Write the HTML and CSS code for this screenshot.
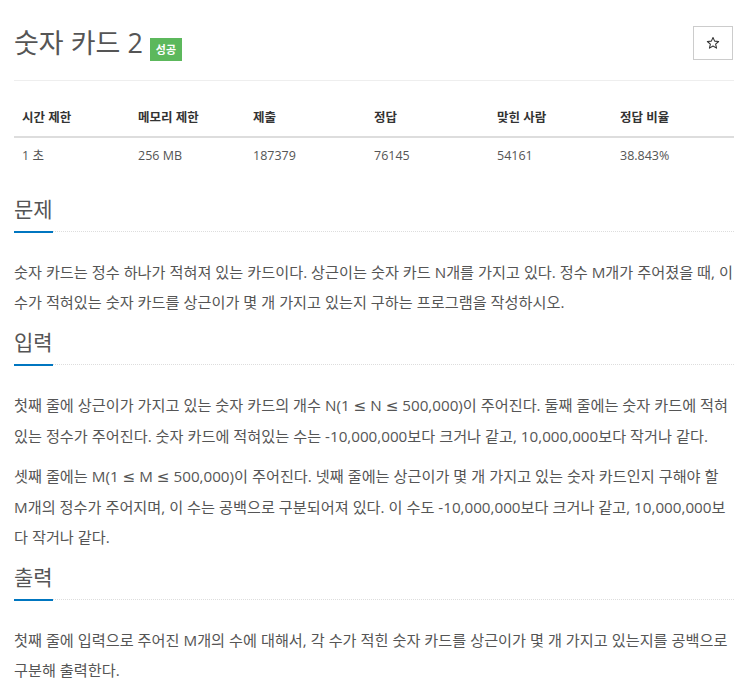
FILE: index.html
```html
<!DOCTYPE html>
<html lang="ko">
<head>
  <meta charset="UTF-8">
  <meta name="viewport" content="width=device-width, initial-scale=1.0">
  <title>숫자 카드 2</title>
  <link rel="stylesheet" href="styles.css">
</head>
<body>

<div class="container">
  <div class="page-header">
    <h1 class="title">숫자 카드 2 <span class="badge">성공</span></h1>
    <button class="star-btn" type="button">
      <svg width="14" height="14" viewBox="0 0 24 24"><path d="M12 2.5l2.8 6.3 6.9.6-5.2 4.6 1.6 6.8L12 17.2l-6.1 3.6 1.6-6.8L2.3 9.4l6.9-.6z" fill="none" stroke="#333" stroke-width="1.8" stroke-linejoin="round"/></svg>
    </button>
  </div>

  <table class="info-table">
    <colgroup>
      <col style="width:116px">
      <col style="width:115px">
      <col style="width:121px">
      <col style="width:123px">
      <col style="width:123px">
      <col style="width:122px">
    </colgroup>
    <thead>
      <tr>
        <th>시간 제한</th>
        <th>메모리 제한</th>
        <th>제출</th>
        <th>정답</th>
        <th>맞힌 사람</th>
        <th>정답 비율</th>
      </tr>
    </thead>
    <tbody>
      <tr>
        <td>1 초</td>
        <td>256 MB</td>
        <td>187379</td>
        <td>76145</td>
        <td>54161</td>
        <td>38.843%</td>
      </tr>
    </tbody>
  </table>

  <section class="problem-section">
    <h2 class="headline"><span>문제</span></h2>
    <div class="problem-text">
      <p>숫자 카드는 정수 하나가 적혀져 있는 카드이다. 상근이는 숫자 카드 <span class="word">N개를</span> 가지고 있다. 정수 <span class="word">M개가</span> 주어졌을 때, 이 수가 적혀있는 숫자 카드를 상근이가 몇 개 가지고 있는지 구하는 프로그램을 작성하시오.</p>
    </div>
  </section>

  <section class="problem-section">
    <h2 class="headline"><span>입력</span></h2>
    <div class="problem-text">
      <p>첫째 줄에 상근이가 가지고 있는 숫자 카드의 개수 N(1 <span class="op">≤</span> N <span class="op">≤</span> 500,000)이 주어진다. 둘째 줄에는 숫자 카드에 적혀있는 정수가 주어진다. 숫자 카드에 적혀있는 수는 -10,000,000보다 크거나 같고, 10,000,000보다 작거나 같다.</p>
      <p>셋째 줄에는 M(1 <span class="op">≤</span> M <span class="op">≤</span> 500,000)이 주어진다. 넷째 줄에는 상근이가 몇 개 가지고 있는 숫자 카드인지 구해야 할 <span class="word">M개의</span> 정수가 주어지며, 이 수는 공백으로 구분되어져 있다. 이 수도 -10,000,000보다 크거나 같고, 10,000,000보다 작거나 같다.</p>
    </div>
  </section>

  <section class="problem-section">
    <h2 class="headline"><span>출력</span></h2>
    <div class="problem-text">
      <p>첫째 줄에 입력으로 주어진 <span class="word">M개의</span> 수에 대해서, 각 수가 적힌 숫자 카드를 상근이가 몇 개 가지고 있는지를 공백으로 구분해 출력한다.</p>
    </div>
  </section>
</div>

</body>
</html>
```

FILE: styles.css
```css
body {
  font-family: 'Open Sans', 'Noto Sans CJK KR', sans-serif;
  margin: 0;
  padding: 0;
  background-color: #fff;
  color: #555;
}
.container {
  padding: 0 13px 0 14px;
}
.page-header {
  display: flex;
  align-items: center;
  justify-content: space-between;
  margin-top: 23px;
  padding-bottom: 17px;
  border-bottom: 1px solid #eee;
}
.title {
  margin: 0;
  font-size: 27px;
  font-weight: 400;
  line-height: 40px;
  color: #555;
}
.badge {
  display: inline-block;
  vertical-align: -1px;
  margin-left: 0;
  padding: 0 6px;
  height: 23px;
  line-height: 23px;
  font-size: 11px;
  font-weight: 700;
  color: #fff;
  background-color: #5cb85c;
}
.star-btn {
  width: 40px;
  height: 34px;
  margin-right: 1px;
  padding: 0;
  border: 1px solid #ccc;
  background-color: #fff;
  display: flex;
  align-items: center;
  justify-content: center;
}
.info-table {
  width: 720px;
  table-layout: fixed;
  border-collapse: collapse;
  margin-top: 19px;
  margin-bottom: 20px;
  font-size: 12.5px;
}
.info-table th,
.info-table td {
  padding: 8px;
  line-height: 20px;
  text-align: left;
}
.info-table th {
  font-weight: 700;
  color: #333;
  border-bottom: 2px solid #ddd;
}
.problem-section {
  margin: 0;
}
.headline {
  display: flex;
  align-items: flex-end;
  margin: 0 0 24px;
  font-size: 21px;
  font-weight: 400;
  line-height: 30px;
}
.headline span {
  padding-bottom: 7px;
  border-bottom: 2px solid #0076c0;
}
.headline::after {
  content: '';
  flex: 1;
  margin-bottom: 1px;
  border-bottom: 1px dotted #ddd;
}
.problem-text {
  font-size: 15.2px;
  line-height: 30px;
}
.problem-text p {
  margin: 0 0 10px;
}
/* latin + hangul words stay together, as in the source page */
.problem-text .word {
  white-space: nowrap;
}
.problem-text .op {
  font-family: 'DejaVu Sans', sans-serif;
}
```
